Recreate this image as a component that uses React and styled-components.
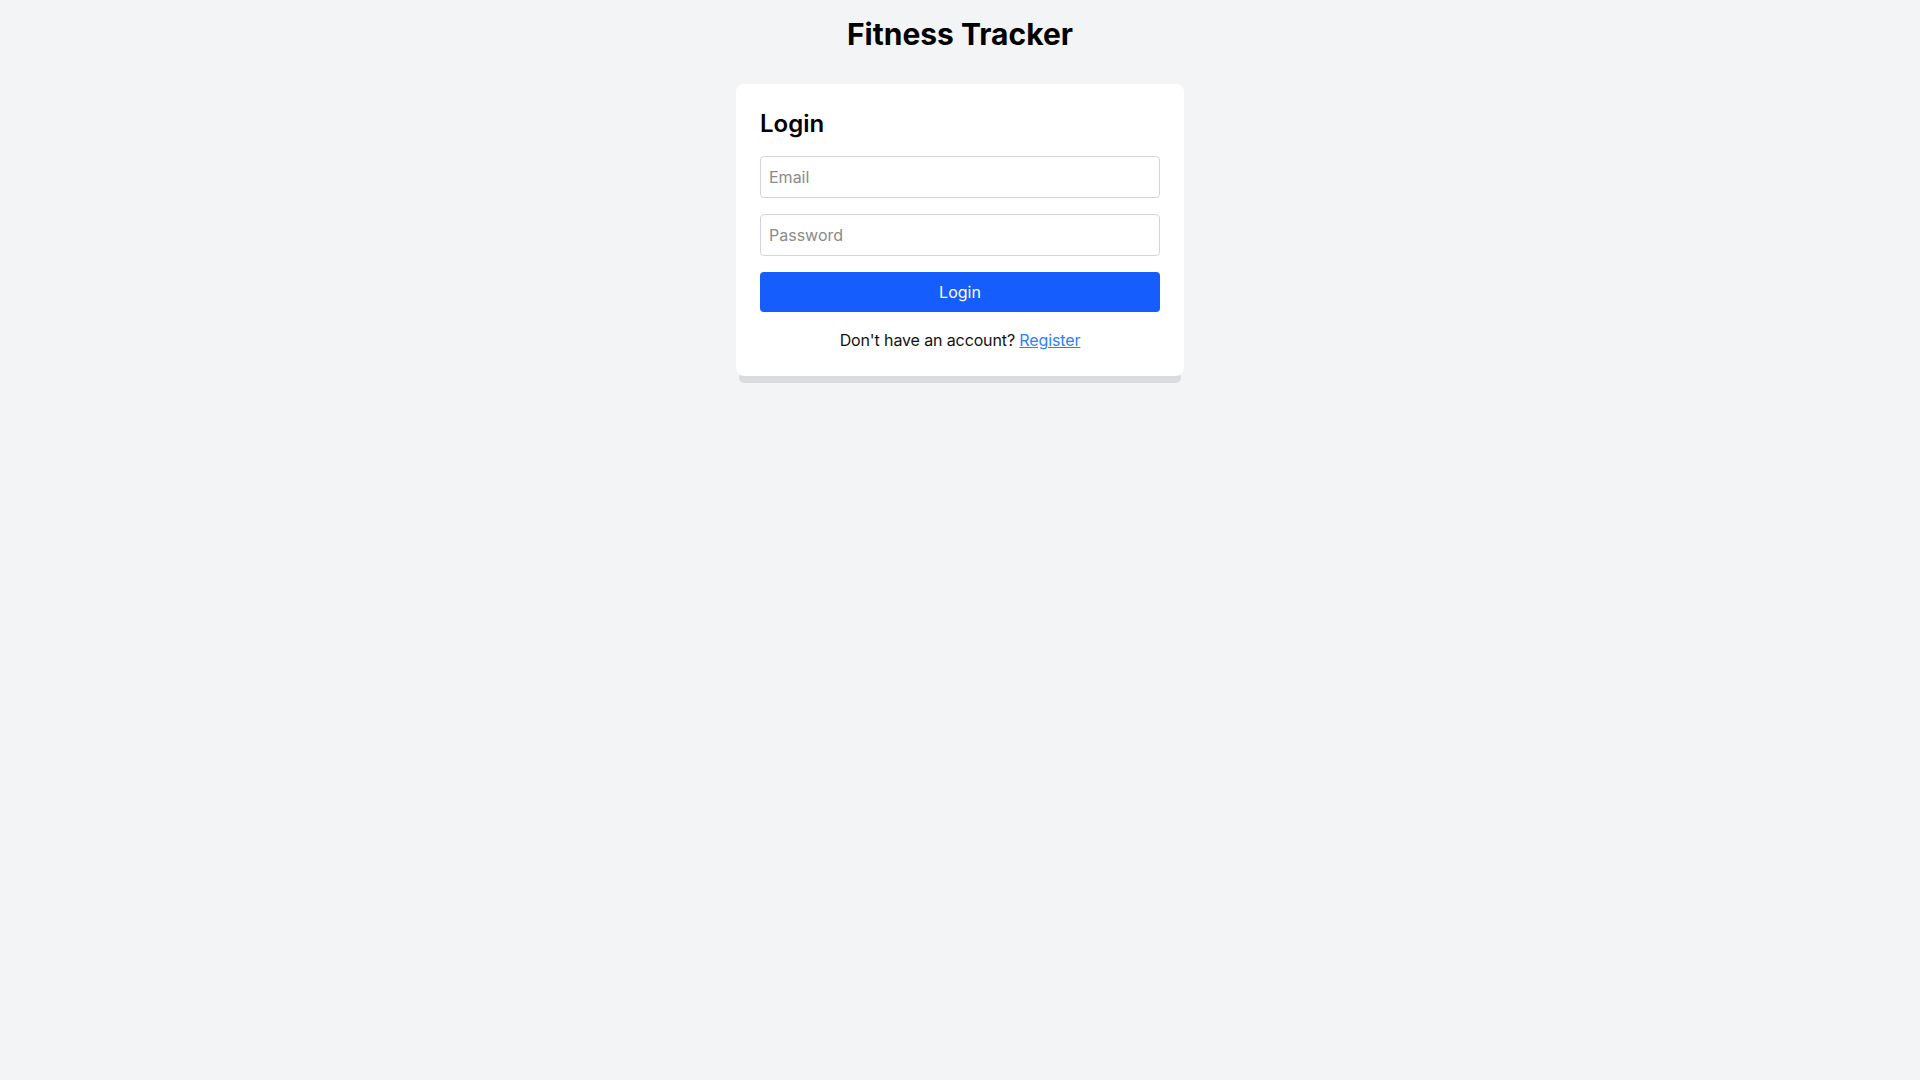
import React from "react";
import styled, { createGlobalStyle } from "styled-components";

const GlobalStyle = createGlobalStyle`
  * {
    box-sizing: border-box;
  }
  html, body {
    margin: 0;
    padding: 0;
    background: #f3f4f6;
    font-family: Inter, "Noto Sans", sans-serif;
    color: #000;
  }
`;

const Page = styled.div`
  min-height: 100vh;
  padding: 16px;
`;

const Title = styled.h1`
  margin: 0 0 32px;
  font-size: 30px;
  line-height: 36px;
  font-weight: 700;
  text-align: center;
`;

const Card = styled.div`
  width: 448px;
  margin: 0 auto;
  padding: 24px;
  background: #fff;
  border-radius: 8px;
  box-shadow: 0 10px 0 -3px rgba(0, 0, 0, 0.1), 0 4px 0 -4px rgba(0, 0, 0, 0.1);
`;

const Heading = styled.h2`
  margin: 0 0 16px;
  font-size: 24px;
  line-height: 32px;
  font-weight: 600;
`;

const Form = styled.form`
  display: flex;
  flex-direction: column;
  gap: 16px;
`;

const Input = styled.input`
  width: 100%;
  padding: 8px;
  font-family: inherit;
  font-size: 16px;
  line-height: 24px;
  color: #000;
  border: 1px solid #d1d5db;
  border-radius: 4px;
  outline: none;

  &::placeholder {
    color: #8a8a8a;
  }
`;

const Button = styled.button`
  width: 100%;
  padding: 8px;
  font-family: inherit;
  font-size: 16px;
  line-height: 24px;
  color: #fff;
  background: #155dfc;
  border: none;
  border-radius: 4px;
  cursor: pointer;
`;

const Footer = styled.p`
  margin: 16px 0 0;
  font-size: 16px;
  line-height: 24px;
  letter-spacing: -0.12px;
  color: #111;
  text-align: center;

  a {
    color: #2b7fff;
    text-decoration: underline;
  }
`;

const App = () => (
  <Page>
    <GlobalStyle />
    <Title>Fitness Tracker</Title>
    <Card>
      <Heading>Login</Heading>
      <Form onSubmit={e => e.preventDefault()}>
        <Input type="email" placeholder="Email" />
        <Input type="password" placeholder="Password" />
        <Button type="submit">Login</Button>
      </Form>
      <Footer>
        Don't have an account? <a href="#">Register</a>
      </Footer>
    </Card>
  </Page>
);

export default App;
